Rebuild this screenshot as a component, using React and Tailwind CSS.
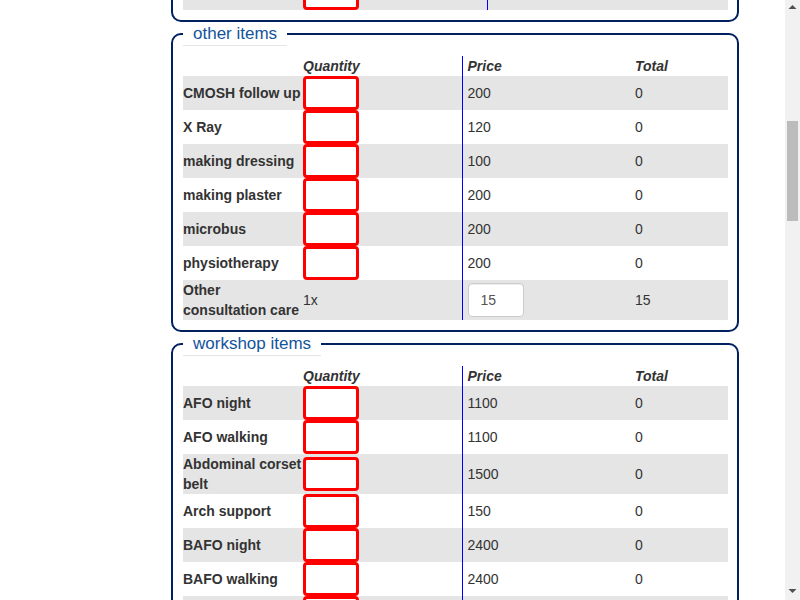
import React, { useLayoutEffect, useRef } from "react";

const consultationItems = [
  ["Consultation", 500], ["Consultation follow up", 300], ["Doctor visit", 400],
  ["Dressing small", 100], ["Dressing large", 200], ["Injection", 50],
  ["Plaster removal", 100], ["Suture", 150], ["Suture removal", 50],
  ["Casting", 300], ["Splinting", 250], ["Traction", 200],
  ["Wound care", 150], ["Nursing care", 100], ["Medication", 100],
  ["Laboratory", 200], ["Ultrasound", 350],
];

const otherItems = [
  ["CMOSH follow up", 200], ["X Ray", 120], ["making dressing", 100],
  ["making plaster", 200], ["microbus", 200], ["physiotherapy", 200],
];

const workshopItems = [
  ["AFO night", 1100], ["AFO walking", 1100], ["Abdominal corset belt", 1500],
  ["Arch support", 150], ["BAFO night", 2400], ["BAFO walking", 2400],
  ["Boots", 900], ["Cervical collar hard", 400], ["Cervical collar soft", 250],
  ["Clubfoot shoes", 800], ["Crutches axillary", 600], ["Crutches elbow", 700],
  ["Denis Browne bar", 500], ["Elbow splint", 300], ["Finger splint", 100],
  ["Foot abduction brace", 1200], ["Hand splint", 300], ["HKAFO", 3500],
  ["Insoles", 200], ["KAFO", 2800], ["Knee brace", 900], ["Knee immobilizer", 700],
  ["Lumbar corset", 1300], ["Milwaukee brace", 4000], ["Night splint", 600],
  ["Orthopedic shoes", 1000], ["Pelvic belt", 800], ["Prosthesis AK", 9000],
  ["Prosthesis BK", 6000], ["Shoe raise", 300], ["Standing frame", 2000],
  ["TLSO", 3000], ["Walker", 1500], ["Wheelchair", 8000], ["Wrist splint", 300],
  ["Repair small", 100], ["Repair large", 400], ["Stump socks", 80],
  ["Toe separator", 50], ["UCBL", 700], ["Wedge", 60], ["Heel cup", 150],
  ["Knee cap", 200], ["Ankle support", 250], ["Shoulder sling", 150],
];

const consumables = [
  ["Bandage", 30], ["Gauze", 20], ["Cotton", 25], ["Plaster roll", 80],
  ["Syringe", 10], ["Gloves", 15], ["Tape", 20], ["Antiseptic", 40],
  ["Saline", 35], ["Splint material", 120], ["Velcro", 30], ["Foam", 60],
  ["Leather", 150], ["Rivets", 10], ["Polypropylene", 300], ["Straps", 40],
  ["Buckles", 20], ["Glue", 50], ["Thread", 10], ["Padding", 45],
];

function Section({ title, items, qtyWidth, priceWidth, extra, legendRef }) {
  return (
    <fieldset className="ml-[171px] w-[568px] min-w-0 border-2 border-[#002060] rounded-[10px] px-[10px] pb-[10px] m-0">
      <legend
        ref={legendRef}
        className="px-[10px] text-[17px] leading-[23px] text-[#13549c] border-b border-[#e5e5e5]"
      >
        {title}
      </legend>
      <table className="mt-[10px] w-[545px] table-fixed border-collapse text-[14px] leading-[20px] text-[#333]">
        <colgroup>
          <col className="w-[120px]" />
          <col style={{ width: qtyWidth }} />
          <col style={{ width: priceWidth }} />
          <col />
        </colgroup>
        <thead>
          <tr className="h-[20px]">
            <th className="p-0" />
            <th className="p-0 text-left font-bold italic">Quantity</th>
            <th className="p-0 pl-[5px] text-left font-bold italic border-l border-[#0000ff]">Price</th>
            <th className="p-0 text-left font-bold italic">Total</th>
          </tr>
        </thead>
        <tbody>
          {items.map(([name, price], i) => (
            <tr key={name} className={i % 2 === 0 ? "bg-[#e5e5e5]" : ""}>
              <td className="p-0 font-bold align-middle">{name}</td>
              <td className="p-0 align-middle">
                <input
                  type="text"
                  className="block w-[56px] h-[34px] border-[3px] border-[#ff0000] rounded-[4px] bg-white outline-none"
                />
              </td>
              <td className="p-0 pl-[5px] align-middle border-l border-[#0000ff]">{price}</td>
              <td className="p-0 align-middle">0</td>
            </tr>
          ))}
          {extra}
        </tbody>
      </table>
    </fieldset>
  );
}

function FakeScrollbar() {
  return (
    <div className="fixed top-0 right-0 h-screen w-[15px] bg-[#f1f1f1] flex flex-col">
      <div className="h-[15px] w-[15px] shrink-0">
        <svg width="15" height="15" viewBox="0 0 15 15">
          <polygon points="3.5,9 7.5,5 11.5,9" fill="#505050" />
        </svg>
      </div>
      <div className="flex-1 flex flex-col items-center">
        <div className="mt-[106px] h-[100px] w-[11px] bg-[#bcbcbc]" />
      </div>
      <div className="h-[15px] w-[15px] shrink-0">
        <svg width="15" height="15" viewBox="0 0 15 15">
          <polygon points="3.5,4 11.5,4 7.5,8" fill="#505050" />
        </svg>
      </div>
    </div>
  );
}

export default function App() {
  const scrollRef = useRef(null);
  const otherLegendRef = useRef(null);

  useLayoutEffect(() => {
    const c = scrollRef.current;
    const l = otherLegendRef.current;
    if (c && l) {
      c.scrollTop += l.getBoundingClientRect().top - 22;
    }
  }, []);

  const otherExtra = (
    <tr className={otherItems.length % 2 === 0 ? "bg-[#e5e5e5]" : ""}>
      <td className="p-0 font-bold align-middle">Other consultation care</td>
      <td className="p-0 align-middle">1x</td>
      <td className="p-0 pl-[5px] align-middle border-l border-[#0000ff]">
        <input
          type="text"
          defaultValue="15"
          className="block w-[56px] h-[34px] px-3 border border-[#cccccc] rounded-[4px] bg-white text-[#555] text-[14px] shadow-[inset_0_1px_1px_rgba(0,0,0,0.075)] outline-none"
        />
      </td>
      <td className="p-0 align-middle">15</td>
    </tr>
  );

  return (
    <div className="relative font-['Liberation_Sans',Arial,sans-serif]">
      <div ref={scrollRef} className="h-screen overflow-hidden bg-white pr-[15px]">
        <div className="pt-[14px] pb-[104px]">
          <Section title="consultation items" items={consultationItems} qtyWidth="184px" priceWidth="148px" />
          <Section
            title="other items"
            items={otherItems}
            qtyWidth="159px"
            priceWidth="173px"
            extra={otherExtra}
            legendRef={otherLegendRef}
          />
          <Section title="workshop items" items={workshopItems} qtyWidth="159px" priceWidth="173px" />
          <Section title="consumables" items={consumables} qtyWidth="159px" priceWidth="173px" />
        </div>
      </div>
      <FakeScrollbar />
    </div>
  );
}
